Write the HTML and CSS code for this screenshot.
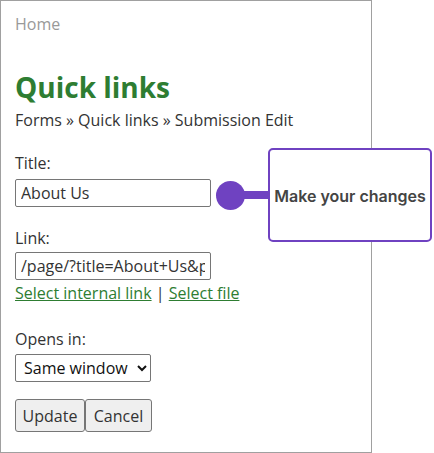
FILE: index.html
```html
<!DOCTYPE html>
<html>
<head>
<meta charset="utf-8">
<link rel="stylesheet" href="styles.css">
</head>
<body>
<div class="frame">
  <div class="home">Home</div>
  <h1 class="title">Quick links</h1>
  <div class="crumbs">Forms » Quick links » Submission Edit</div>
  <form class="form">
    <label class="label label-title">Title:</label>
    <input class="field field-title" type="text" value="About Us">
    <label class="label label-link">Link:</label>
    <input class="field field-link" type="text" value="/page/?title=About+Us&amp;page=1">
    <div class="links"><a href="#" class="link">Select internal link</a> | <a href="#" class="link">Select file</a></div>
    <label class="label label-opens">Opens in:</label>
    <select class="select"><option>Same window</option><option>New window</option></select>
    <div class="buttons">
      <button type="button" class="btn btn-update">Update</button>
      <button type="button" class="btn btn-cancel">Cancel</button>
    </div>
  </form>
</div>
<div class="callout">
  <div class="dot"></div>
  <div class="stem"></div>
  <div class="bubble">Make your changes</div>
</div>
</body>
</html>
```
FILE: styles.css
```css
html, body {
  margin: 0;
  padding: 0;
  background: #fff;
}
body {
  font-family: "Open Sans", "Liberation Sans", sans-serif;
  font-size: 16px;
  line-height: 24px;
  color: #333;
  width: 434px;
  height: 453px;
  position: relative;
  overflow: hidden;
}
.frame {
  box-sizing: border-box;
  width: 372px;
  height: 453px;
  border: 1px solid #a0a0a0;
  padding: 11px 14px 10px;
}
.home {
  color: #999;
}
.title {
  margin: 34px 0 0;
  font-size: 28px;
  line-height: 34px;
  font-weight: 700;
  color: #2e7d32;
}
.crumbs {
  margin-top: 4px;
}
.form {
  display: flex;
  flex-direction: column;
  align-items: flex-start;
  margin: 0;
}
.label {
  display: block;
}
.label-title { margin-top: 19px; }
.label-link { margin-top: 19px; }
.label-opens { margin-top: 22px; }
.field {
  box-sizing: border-box;
  width: 196px;
  height: 28px;
  margin-top: 4px;
  padding: 0 5px;
  font-family: "Open Sans", "Liberation Sans", sans-serif;
  font-size: 16px;
  color: #333;
  border: 1px solid #767676;
  border-radius: 2px;
  background: #fff;
}
.field-link { margin-top: 2px; }
.links {
  margin-top: 1px;
}
.link {
  color: #2e7d32;
  text-decoration: underline;
}
.select {
  box-sizing: border-box;
  width: 136px;
  height: 28px;
  margin-top: 3px;
  font-family: "Open Sans", "Liberation Sans", sans-serif;
  font-size: 16px;
  color: #111;
  border: 1px solid #767676;
  border-radius: 2px;
  background: #fff;
  padding: 0 4px;
}
.buttons {
  display: flex;
  gap: 0;
  margin-top: 17px;
}
.btn {
  box-sizing: border-box;
  height: 33px;
  padding: 0;
  font-family: "Open Sans", "Liberation Sans", sans-serif;
  font-size: 16px;
  color: #333;
  background: #efefef;
  border: 1px solid #767676;
  border-radius: 3px;
}
.btn-update { width: 70px; }
.btn-cancel { width: 67px; }
.callout {
  position: absolute;
  left: 216px;
  top: 148px;
  display: flex;
  align-items: center;
  height: 94px;
}
.dot {
  width: 29px;
  height: 29px;
  border-radius: 50%;
  background: #6f42c1;
  flex: none;
}
.stem {
  width: 24px;
  height: 8px;
  margin-left: -1px;
  background: #6f42c1;
  flex: none;
}
.bubble {
  box-sizing: border-box;
  width: 164px;
  height: 94px;
  border: 2px solid #6f42c1;
  border-radius: 5px;
  background: #fff;
  display: flex;
  align-items: center;
  justify-content: center;
  font-family: Inter, "Liberation Sans", sans-serif;
  font-size: 16px;
  font-weight: 600;
  color: #444;
  padding-top: 1px;
}
```
